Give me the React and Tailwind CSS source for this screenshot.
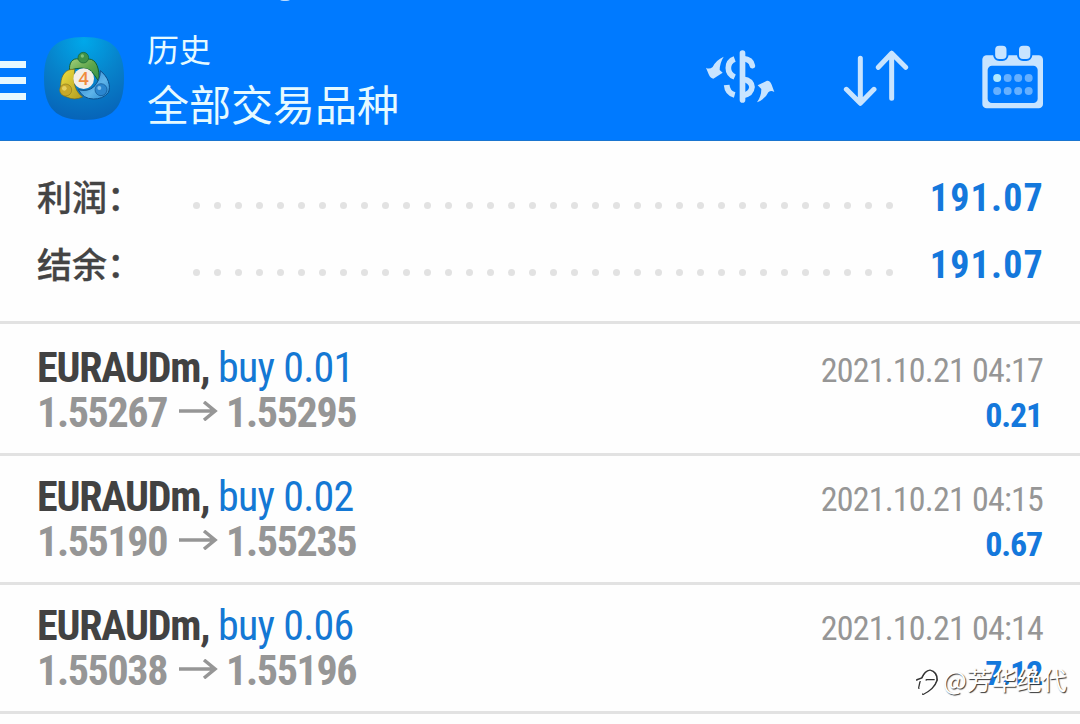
import React from 'react';

const summary = [
  { label: '利润', value: '191.07' },
  { label: '结余', value: '191.07' },
];

const deals = [
  { symbol: 'EURAUDm', side: 'buy 0.01', open: '1.55267', close: '1.55295', time: '2021.10.21 04:17', profit: '0.21' },
  { symbol: 'EURAUDm', side: 'buy 0.02', open: '1.55190', close: '1.55235', time: '2021.10.21 04:15', profit: '0.67' },
  { symbol: 'EURAUDm', side: 'buy 0.06', open: '1.55038', close: '1.55196', time: '2021.10.21 04:14', profit: '7.12' },
];

function AppLogo() {
  return (
    <svg className="ml-[18px] mt-[37px] h-[83px] w-20 shrink-0" viewBox="132 110 240 249">
      <defs>
        <radialGradient id="tile" cx="0.5" cy="0.05" r="0.95">
          <stop offset="0" stopColor="#00a8ea" />
          <stop offset="0.5" stopColor="#0783cb" />
          <stop offset="1" stopColor="#0764b8" />
        </radialGradient>
        <linearGradient id="green" x1="0" y1="0" x2="1" y2="1">
          <stop offset="0" stopColor="#a5d07b" />
          <stop offset="0.5" stopColor="#5fa64b" />
          <stop offset="1" stopColor="#2d8f4a" />
        </linearGradient>
        <linearGradient id="yellow" x1="0" y1="0" x2="1" y2="1">
          <stop offset="0" stopColor="#f0e040" />
          <stop offset="1" stopColor="#b09a20" />
        </linearGradient>
        <linearGradient id="blue" x1="0" y1="0" x2="1" y2="1">
          <stop offset="0" stopColor="#1f78c4" />
          <stop offset="0.6" stopColor="#5fb4ea" />
          <stop offset="1" stopColor="#1f86cf" />
        </linearGradient>
      </defs>
      <path
        d="M252 110C335 110 372 142 372 234S335 359 252 359S132 326 132 234S169 110 252 110Z"
        fill="url(#tile)"
      />
      <path d="M209 210C206 188 218 172 236 176Q250 184 266 176C290 176 299 206 297 244Q285 226 273 211Q250 196 209 210Z" fill="url(#green)" stroke="#14622f" strokeWidth="3" />
      <path d="M224 207C198 205 184 222 182 252Q176 285 202 291Q224 301 248 290Q224 273 222 240Z" fill="url(#yellow)" stroke="#6b6320" strokeWidth="2" />
      <path d="M301 211C324 229 334 257 325 277Q308 297 280 296Q250 296 235 268Q263 275 281 260Q301 240 301 211Z" fill="url(#blue)" stroke="#0c4f8c" strokeWidth="3" />
      <circle cx="250" cy="172" r="16" fill="#3f9248" stroke="#14622f" strokeWidth="2" />
      <circle cx="197" cy="269" r="18" fill="#c8a92a" stroke="#8b7a20" strokeWidth="2" />
      <circle cx="303" cy="268" r="18" fill="#2b86cf" stroke="#0c4f8c" strokeWidth="2" />
      <circle cx="247" cy="167" r="5" fill="#7fc07a" />
      <circle cx="193" cy="264" r="7" fill="#e6d060" />
      <circle cx="298" cy="263" r="6" fill="#7fc0ee" />
      <circle cx="251" cy="235" r="31" fill="#f3eee9" />
      <text x="251" y="254" textAnchor="middle" fontSize="54" fontWeight="600" fill="#f08a3c" fontFamily="Open Sans, sans-serif">4</text>
    </svg>
  );
}

function CurrencyIcon() {
  return (
    <svg className="h-14 w-[72px]" viewBox="45 58 216 168" fill="none" stroke="#c8e4ff" strokeWidth="17">
      <path d="M157.500 70V211" strokeLinecap="round" />
      <path d="M134 88Q115 95 115 115Q115 134 134 142M110 166Q112 190 134 196" />
      <path d="M160 87Q184 89 187 108" strokeLinecap="round" />
      <path d="M160 149Q184 152 186 172Q184 193 160 197" />
      <path
        d="M101 81Q89 101 89 121L98 129L70 147Q62 147 56 134L48 114Q58 120 68 112Q78 91 101 81Z"
        fill="#c8e4ff"
        stroke="none"
      />
      <path
        d="M201 218Q214 200 214 178L203 167L231 153Q240 152 245 165L253 187Q243 181 235 188Q226 209 201 218Z"
        fill="#c8e4ff"
        stroke="none"
      />
    </svg>
  );
}

function SortIcon() {
  return (
    <svg
      className="h-14 w-[66px]"
      viewBox="459 60 198 168"
      fill="none"
      stroke="#c8e4ff"
      strokeWidth="15"
      strokeLinecap="round"
      strokeLinejoin="round"
    >
      <path d="M511 85V219M469 178L511 220L552 178" />
      <path d="M605 205V70M565 112L605 70L647 112" />
    </svg>
  );
}

function CalendarIcon() {
  return (
    <svg className="h-16 w-[62px]" viewBox="875 46 186 192">
      <rect x="876" y="77" width="182" height="159" rx="13" fill="#c8e4ff" />
      <rect x="892" y="108" width="150" height="112" rx="13" fill="#007aff" />
      {[931.5, 1003].map((x) => (
        <rect key={x} x={x - 20} y="45" width="40" height="46" rx="15" fill="#c8e4ff" stroke="#007aff" strokeWidth="6" />
      ))}
      {[145, 184].map((y) =>
        [920.5, 952, 983.5, 1015].map((x) => (
          <circle key={`${x}-${y}`} cx={x} cy={y} r="12" fill={x === 920.5 && y === 145 ? '#b0e8ff' : '#66b0ff'} />
        ))
      )}
    </svg>
  );
}

function Header() {
  return (
    <header className="relative flex h-[141px] items-start border-b border-[#1a75d0] bg-[#007aff]">
      <div className="absolute left-[277px] top-[-12px] h-[13px] w-4 rounded-full bg-[#b9dcff]" />
      <div className="mt-[61px] flex w-[26px] shrink-0 flex-col gap-[9px]">
        <div className="h-[7px] bg-[#e6f8ff]" />
        <div className="h-[7px] bg-[#e6f8ff]" />
        <div className="h-[7px] bg-[#e6f8ff]" />
      </div>
      <AppLogo />
      <div className="ml-[23px] flex-1 whitespace-nowrap pt-8 font-['Noto_Sans_CJK_SC',sans-serif] text-[#e6faff]">
        <div className="text-[32px] leading-8">历史</div>
        <div className="mt-[18px] text-[42px] leading-[42px]">全部交易品种</div>
      </div>
      <div className="mr-[36px] flex items-start">
        <div className="mt-[49px]">
          <CurrencyIcon />
        </div>
        <div className="ml-[66px] mt-[50px]">
          <SortIcon />
        </div>
        <div className="ml-[73px] mt-[45px]">
          <CalendarIcon />
        </div>
      </div>
    </header>
  );
}

function SummaryRow({ label, value }) {
  return (
    <div className="flex h-[67px] items-center pl-[37px] pr-9">
      <div className="-mt-1 w-[156px] whitespace-nowrap font-['Noto_Sans_CJK_SC',sans-serif] text-[35px] font-medium leading-none text-[#444] [-webkit-text-stroke:0.3px_#444]">
        {label}：
      </div>
      <div className="mt-[15px] flex w-[700px] justify-between">
        {Array.from({ length: 34 }, (_, i) => (
          <span key={i} className="h-[7px] w-[7px] rounded-full bg-[#e2e2e2]" />
        ))}
      </div>
      <div className="ml-auto whitespace-nowrap font-['Roboto',sans-serif] text-[38px] font-bold leading-none tracking-[1.2px] text-[#1478dc] font-stretch-semi-condensed">
        {value}
      </div>
    </div>
  );
}

function DealRow({ deal }) {
  return (
    <div className="flex h-[129px] items-start justify-between border-b-[3px] border-[#e2e2e2] pl-[37px] pr-[37px] pt-[18px] font-['Roboto',sans-serif] font-stretch-condensed">
      <div className="whitespace-nowrap">
        <div className="text-[42px] leading-[45px]">
          <span className="font-bold tracking-[-1.15px] text-[#424242]">{deal.symbol}, </span>
          <span className="tracking-[-0.75px] text-[#1478d4]">{deal.side}</span>
        </div>
        <div className="flex items-center text-[42px] font-bold leading-[45px] tracking-[-1.35px] text-[#969696]">
          <span>{deal.open}</span>
          <svg className="-mt-1 ml-[12px] mr-2 h-5 w-[39px]" viewBox="0 0 39 20" fill="none" stroke="#969696" strokeWidth="3.500">
            <path d="M0 10H36M25 1L36 10L25 19" />
          </svg>
          <span>{deal.close}</span>
        </div>
      </div>
      <div className="mt-[3px] flex flex-col items-end whitespace-nowrap text-[34px] leading-[45px]">
        <div className="tracking-[-0.8px] text-[#969696]">{deal.time}</div>
        <div className="mr-px font-bold tracking-[-1.2px] text-[#1478dc]">{deal.profit}</div>
      </div>
    </div>
  );
}

function Watermark() {
  return (
    <div className="absolute left-[915px] top-[662px] flex items-center whitespace-nowrap">
      <svg className="h-[34px] w-6" viewBox="0 0 24 34" fill="none" strokeLinecap="round">
        <path
          d="M2 18L6 16.500L4 26M7 16Q10 9 15 8.500Q22 10 22 18Q19 27 8 32M11.500 18H20"
          stroke="#333"
          strokeWidth="2"
        />
        <path d="M3 19L7 17.500L5 26M8 17Q11 10 15 9.500Q20.500 11 20.500 18Q18 26 8 31M12 19H20" stroke="#fff" strokeWidth="1.500" />
      </svg>
      <span className="ml-1 font-['Noto_Sans_CJK_SC',sans-serif] text-[25px] leading-8 text-white [text-shadow:1px_1px_1px_#333]">
        @芳华绝代
      </span>
    </div>
  );
}

export default function App() {
  return (
    <div className="relative h-[724px] w-[1080px] overflow-hidden bg-[#fefefe]">
      <Header />
      <section className="h-[183px] border-b-[3px] border-[#e2e2e2] pt-[23px]">
        {summary.map((row) => (
          <SummaryRow key={row.label} {...row} />
        ))}
      </section>
      <section className="pt-[3px]">
        {deals.map((deal) => (
          <DealRow key={deal.time} deal={deal} />
        ))}
      </section>
      <Watermark />
    </div>
  );
}
